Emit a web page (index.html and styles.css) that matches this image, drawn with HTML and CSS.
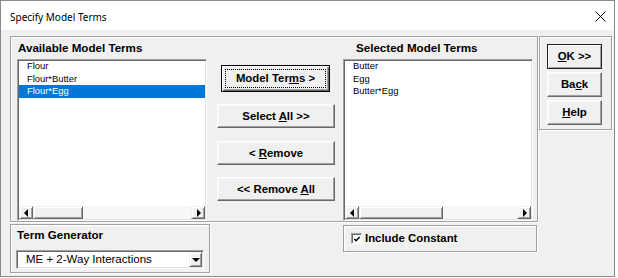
FILE: index.html
```html
<!DOCTYPE html>
<html>
<head>
<meta charset="utf-8">
<link rel="stylesheet" href="styles.css">
</head>
<body>
<div class="window">
  <div class="titlebar">
    <span class="title">Specify Model Terms</span>
    <svg class="close" width="11" height="11" viewBox="0 0 11 11"><path d="M0.5 0.5 L10.5 10.5 M10.5 0.5 L0.5 10.5" stroke="#000" stroke-width="1" fill="none"/></svg>
  </div>
  <div class="body">
    <div class="left-col">
      <div class="frame main-frame">
        <div class="list-col">
          <div class="label">Available Model Terms</div>
          <div class="listbox">
            <div class="items">
              <div class="item">Flour</div>
              <div class="item">Flour*Butter</div>
              <div class="item selected">Flour*Egg</div>
            </div>
            <div class="hscroll">
              <div class="sb-btn"><span class="tri-left"></span></div>
              <div class="sb-track"><div class="sb-thumb" style="width:50px"></div></div>
              <div class="sb-btn"><span class="tri-right"></span></div>
            </div>
          </div>
        </div>
        <div class="btn-col">
          <div class="btn default"><span>Model Ter<u>m</u>s &gt;</span></div>
          <div class="btn mid first"><span>Select <u>A</u>ll &gt;&gt;</span></div>
          <div class="btn mid second"><span>&lt; <u>R</u>emove</span></div>
          <div class="btn mid third"><span>&lt;&lt; Remove <u>A</u>ll</span></div>
        </div>
        <div class="list-col right-list">
          <div class="label">Selected Model Terms</div>
          <div class="listbox">
            <div class="items">
              <div class="item">Butter</div>
              <div class="item">Egg</div>
              <div class="item">Butter*Egg</div>
            </div>
            <div class="hscroll">
              <div class="sb-btn"><span class="tri-left"></span></div>
              <div class="sb-track"><div class="sb-thumb" style="width:84px"></div></div>
              <div class="sb-btn"><span class="tri-right"></span></div>
            </div>
          </div>
        </div>
      </div>
      <div class="bottom-row">
        <div class="frame term-frame">
          <div class="label">Term Generator</div>
          <div class="combo">
            <span class="combo-text">ME + 2-Way Interactions</span>
            <div class="combo-btn"><span class="tri-down"></span></div>
          </div>
        </div>
        <div class="frame const-frame">
          <div class="checkbox">
            <svg width="9" height="9" viewBox="0 0 9 9"><path d="M1.5 3.8 L3.5 5.8 L7.5 1.8" stroke="#000" stroke-width="1.6" fill="none"/></svg>
          </div>
          <span class="check-label">Include Constant</span>
        </div>
      </div>
    </div>
    <div class="frame side-frame">
      <div class="btn side ok"><span><u>O</u>K &gt;&gt;</span></div>
      <div class="btn side"><span>Ba<u>c</u>k</span></div>
      <div class="btn side"><span><u>H</u>elp</span></div>
    </div>
  </div>
</div>
</body>
</html>
```

FILE: styles.css
```css
html, body {
  margin: 0;
  padding: 0;
  background: #ffffff;
}

body {
  font-family: "Liberation Sans", Arial, sans-serif;
  color: #000;
}

.window {
  width: 615px;
  height: 277px;
  box-sizing: border-box;
  border: 1px solid #8a8a8a;
  background: #f0f0f0;
  display: flex;
  flex-direction: column;
}

.titlebar {
  height: 29px;
  flex: none;
  background: #ffffff;
  display: flex;
  align-items: center;
  justify-content: space-between;
  padding: 0 8px 0 9px;
}

.title {
  font-family: "Noto Sans", "Open Sans", sans-serif;
  font-size: 10px;
  color: #000;
  position: relative;
  top: 1px;
}

.close {
  display: block;
  position: relative;
  top: 1px;
}

.body {
  flex: 1;
  display: flex;
  align-items: flex-start;
  padding: 6px 0 0 9px;
}

.frame {
  box-sizing: border-box;
  border: 1px solid #a0a0a0;
  box-shadow: inset 1px 1px 0 #ffffff, 1px 1px 0 #ffffff;
}

.left-col {
  width: 528px;
  display: flex;
  flex-direction: column;
}

.main-frame {
  height: 186px;
  display: flex;
  align-items: flex-start;
}

.label {
  font-weight: bold;
  font-size: 11.6px;
  line-height: 13px;
  white-space: nowrap;
}

.list-col {
  width: 190px;
  margin-left: 6px;
  display: flex;
  flex-direction: column;
}

.list-col .label {
  height: 22px;
  box-sizing: border-box;
  padding: 4px 0 0 1px;
}

.right-list {
  margin-left: 8px;
}

.right-list .label {
  padding-left: 13px;
}

.listbox {
  height: 162px;
  box-sizing: border-box;
  background: #ffffff;
  border-top: 1px solid #a0a0a0;
  border-left: 1px solid #a0a0a0;
  border-right: 1px solid #ffffff;
  border-bottom: 1px solid #ffffff;
  box-shadow: inset 1px 1px 0 #696969, inset -1px -1px 0 #e3e3e3;
  padding: 1px;
  display: flex;
  flex-direction: column;
}

.items {
  flex: 1;
  margin-top: -1px;
}

.item {
  font-size: 9.4px;
  line-height: 12.67px;
  height: 12.67px;
  padding-left: 8px;
  white-space: nowrap;
}

.item.selected {
  background: #0078d7;
  color: #ffffff;
}

.hscroll {
  height: 13px;
  flex: none;
  display: flex;
  background: #f7f7f7;
}

.sb-btn {
  width: 14px;
  flex: none;
  box-sizing: border-box;
  background: #f0f0f0;
  border-top: 1px solid #f0f0f0;
  border-left: 1px solid #f0f0f0;
  border-right: 1px solid #696969;
  border-bottom: 1px solid #696969;
  box-shadow: inset 1px 1px 0 #ffffff, inset -1px -1px 0 #a0a0a0;
  display: flex;
  align-items: center;
  justify-content: center;
}

.sb-track {
  flex: 1;
  display: flex;
}

.sb-thumb {
  box-sizing: border-box;
  height: 13px;
  background: #f0f0f0;
  border-top: 1px solid #f0f0f0;
  border-left: 1px solid #f0f0f0;
  border-right: 1px solid #696969;
  border-bottom: 1px solid #696969;
  box-shadow: inset 1px 1px 0 #ffffff, inset -1px -1px 0 #a0a0a0;
}

.tri-left {
  width: 0;
  height: 0;
  border-top: 4px solid transparent;
  border-bottom: 4px solid transparent;
  border-right: 4px solid #000;
  margin-right: 1px;
}

.tri-right {
  width: 0;
  height: 0;
  border-top: 4px solid transparent;
  border-bottom: 4px solid transparent;
  border-left: 4px solid #000;
  margin-left: 1px;
}

.tri-down {
  width: 0;
  height: 0;
  border-left: 4px solid transparent;
  border-right: 4px solid transparent;
  border-top: 4px solid #000;
}

.btn-col {
  width: 118px;
  margin-left: 10px;
  padding-top: 28px;
  display: flex;
  flex-direction: column;
}

.btn {
  box-sizing: border-box;
  background: #f0f0f0;
  border-top: 1px solid #ffffff;
  border-left: 1px solid #ffffff;
  border-right: 1px solid #696969;
  border-bottom: 1px solid #696969;
  box-shadow: inset -1px -1px 0 #a0a0a0, inset 1px 1px 0 #f8f8f8;
  display: flex;
  align-items: center;
  justify-content: center;
  font-weight: bold;
  font-size: 11.4px;
  line-height: 13px;
  white-space: nowrap;
  position: relative;
}

.btn.default {
  height: 27px;
  margin: 0 5px 0 4px;
  border: 1px solid #000;
  box-shadow: inset 1px 1px 0 #ffffff, inset -1px -1px 0 #696969, inset -2px -2px 0 #a0a0a0;
}

.btn.default::after {
  content: "";
  position: absolute;
  left: 3px;
  top: 3px;
  right: 3px;
  bottom: 3px;
  border: 1px dotted #000;
}

.btn.mid {
  height: 24px;
}

.btn.first {
  margin-top: 12px;
}

.btn.second {
  margin-top: 13px;
}

.btn.third {
  margin-top: 12px;
}

.btn u {
  text-decoration: underline;
  text-underline-offset: 1px;
}

.bottom-row {
  display: flex;
  align-items: flex-start;
  margin-top: 2px;
}

.term-frame {
  width: 200px;
  height: 49px;
  padding: 3px 0 0 5px;
  display: flex;
  flex-direction: column;
}

.term-frame .label {
  padding-left: 1px;
}

.combo {
  margin-top: 9px;
  width: 188px;
  height: 19px;
  box-sizing: border-box;
  background: #ffffff;
  border-top: 1px solid #a0a0a0;
  border-left: 1px solid #a0a0a0;
  border-right: 1px solid #ffffff;
  border-bottom: 1px solid #ffffff;
  box-shadow: inset 1px 1px 0 #696969, inset -1px -1px 0 #e3e3e3;
  padding: 1px;
  display: flex;
  align-items: center;
}

.combo-text {
  flex: 1;
  font-size: 11.5px;
  line-height: 15px;
  padding-left: 8px;
  white-space: nowrap;
}

.combo-btn {
  width: 13px;
  height: 15px;
  box-sizing: border-box;
  background: #f0f0f0;
  border-top: 1px solid #f0f0f0;
  border-left: 1px solid #f0f0f0;
  border-right: 1px solid #696969;
  border-bottom: 1px solid #696969;
  box-shadow: inset 1px 1px 0 #ffffff, inset -1px -1px 0 #a0a0a0;
  display: flex;
  align-items: center;
  justify-content: center;
}

.const-frame {
  width: 194px;
  height: 27px;
  margin: 1px 0 0 133px;
  padding-left: 7px;
  display: flex;
  align-items: center;
}

.checkbox {
  width: 11px;
  height: 11px;
  box-sizing: border-box;
  background: #ffffff;
  border-top: 1px solid #a0a0a0;
  border-left: 1px solid #a0a0a0;
  border-right: 1px solid #ffffff;
  border-bottom: 1px solid #ffffff;
  box-shadow: inset 1px 1px 0 #696969;
  display: flex;
  align-items: center;
  justify-content: center;
  padding: 1px 0 0 1px;
}

.checkbox svg {
  display: block;
}

.check-label {
  margin-left: 3px;
  font-weight: bold;
  font-size: 11.4px;
  line-height: 13px;
  white-space: nowrap;
}

.side-frame {
  width: 73px;
  height: 94px;
  margin-left: 1px;
  padding: 7px 0 0 7px;
  display: flex;
  flex-direction: column;
  gap: 3px;
}

.btn.side {
  width: 55px;
  height: 25px;
}

.btn.ok {
  border: 1px solid #222;
  box-shadow: inset 1px 1px 0 #ffffff, inset -1px -1px 0 #a0a0a0;
}
```
